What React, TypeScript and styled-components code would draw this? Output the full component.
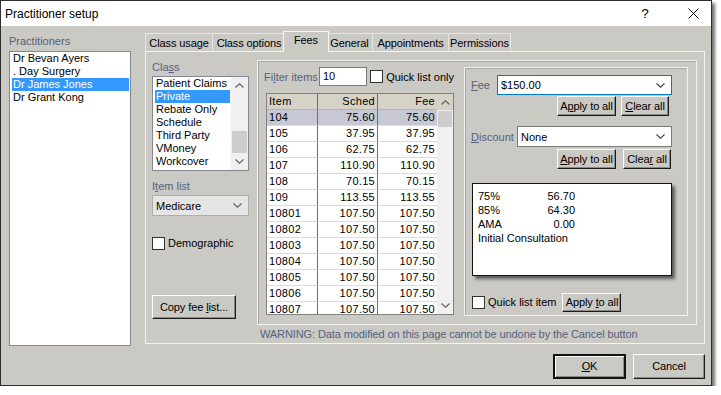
import React from 'react';
import styled, { createGlobalStyle, css } from 'styled-components';

const BG = '#CAC9C4';
const LABEL = '#56617F';

const GlobalStyle = createGlobalStyle`
  html, body { margin: 0; padding: 0; background: #fff; }
  body { font-family: "Liberation Sans", Arial, sans-serif; font-size: 11px; color: #000; }
  * { box-sizing: border-box; }
  u { text-decoration: underline; text-underline-offset: 1px; }
`;

const Window = styled.div`
  width: 712px;
  height: 386px;
  border: 1px solid #2e2e2e;
  background: ${BG};
  box-shadow: 3px 3px 3px rgba(0, 0, 0, 0.55);
  display: flex;
  flex-direction: column;
`;

const TitleBar = styled.div`
  height: 25px;
  background: #fff;
  display: flex;
  align-items: center;
  padding-left: 4px;
  font-size: 12px;
  flex-shrink: 0;
`;

const TitleText = styled.span`
  flex: 1;
`;

const TitleButtons = styled.div`
  display: flex;
  gap: 12px;
  height: 100%;
`;

const TitleButton = styled.div`
  width: 36px;
  display: flex;
  align-items: center;
  justify-content: center;
  font-size: 13px;
`;

const Body = styled.div`
  display: grid;
  grid-template-columns: 122px 560px;
  grid-template-rows: 320px auto;
  column-gap: 14px;
  padding-left: 8px;
`;

const LeftCol = styled.div`
  display: flex;
  flex-direction: column;
`;

const Label = styled.div<{ $mt?: number }>`
  color: ${LABEL};
  height: 13px;
  line-height: 13px;
  margin-top: ${(p) => p.$mt ?? 0}px;
  white-space: nowrap;
`;

const ListBox = styled.div<{ $w: number; $h: number; $mt?: number }>`
  width: ${(p) => p.$w}px;
  height: ${(p) => p.$h}px;
  margin-top: ${(p) => p.$mt ?? 0}px;
  background: #fff;
  border: 1px solid #828790;
  display: flex;
  overflow: hidden;
`;

const ListItems = styled.div`
  flex: 1;
  display: flex;
  flex-direction: column;
`;

const ListItem = styled.div<{ $selected?: boolean }>`
  height: 13px;
  line-height: 13px;
  margin: 0 1px 0 2px;
  padding-left: 1px;
  white-space: nowrap;
  ${(p) =>
    p.$selected &&
    css`
      background: #3399ff;
      color: #fff;
    `}
`;

const VScroll = styled.div<{ $w: number }>`
  width: ${(p) => p.$w}px;
  background: #f0f0f0;
  display: flex;
  flex-direction: column;
  align-items: stretch;
`;

const ScrollArrow = styled.div<{ $h: number }>`
  height: ${(p) => p.$h}px;
  display: flex;
  align-items: center;
  justify-content: center;
`;

const ScrollTrack = styled.div`
  flex: 1;
  display: flex;
  flex-direction: column;
`;

const ScrollThumb = styled.div<{ $top: number; $h: number }>`
  margin-top: ${(p) => p.$top}px;
  height: ${(p) => p.$h}px;
  background: #cdcdcd;
  margin-left: 1px;
  margin-right: 1px;
`;

const RightCol = styled.div`
  display: flex;
  flex-direction: column;
  padding-top: 5px;
`;

const TabStrip = styled.div`
  height: 20px;
  display: flex;
  align-items: flex-end;
  position: relative;
  z-index: 1;
`;

const Tab = styled.div<{ $w: number; $active?: boolean }>`
  width: ${(p) => p.$w}px;
  height: 18px;
  border: 1px solid #e6e5e1;
  border-bottom: none;
  margin-right: -1px;
  display: flex;
  align-items: center;
  justify-content: center;
  white-space: nowrap;
  letter-spacing: -0.1px;
  background: ${BG};
  ${(p) =>
    p.$active &&
    css`
      height: 21px;
      margin: 0 -3px -1px -2px;
      padding-bottom: 4px;
      background: ${BG};
      border-color: #f6f6f6;
      position: relative;
      z-index: 2;
    `}
`;

const Panel = styled.div`
  height: 293px;
  border: 1px solid #f4f4f4;
  display: flex;
  padding-left: 6px;
`;

const PanelLeft = styled.div`
  width: 97px;
  display: flex;
  flex-direction: column;
`;

const Combo = styled.div<{ $w: number; $h: number; $variant: 'flat' | 'focus' | 'plain'; $mt?: number }>`
  width: ${(p) => p.$w}px;
  height: ${(p) => p.$h}px;
  margin-top: ${(p) => p.$mt ?? 0}px;
  display: flex;
  align-items: center;
  padding-left: 3px;
  padding-right: 6px;
  justify-content: space-between;
  ${(p) =>
    p.$variant === 'flat'
      ? css`
          background: #e5e5e5;
          border: 1px solid #adadad;
        `
      : p.$variant === 'focus'
      ? css`
          background: #fff;
          border: 1px solid #0078d7;
        `
      : css`
          background: #fff;
          border: 1px solid #7a7a7a;
        `}
`;

const CheckRow = styled.div<{ $mt?: number; $ml?: number }>`
  display: flex;
  align-items: center;
  gap: 3px;
  height: 14px;
  margin-top: ${(p) => p.$mt ?? 0}px;
  margin-left: ${(p) => p.$ml ?? 0}px;
  white-space: nowrap;
`;

const CheckBox = styled.div`
  width: 13px;
  height: 13px;
  background: #fff;
  border: 1px solid #333;
  flex-shrink: 0;
`;

const Button = styled.div<{ $w: number; $h: number; $mt?: number; $ml?: number; $default?: boolean }>`
  width: ${(p) => p.$w}px;
  height: ${(p) => p.$h}px;
  margin-top: ${(p) => p.$mt ?? 0}px;
  margin-left: ${(p) => p.$ml ?? 0}px;
  line-height: ${(p) => p.$h - 2}px;
  text-align: center;
  white-space: nowrap;
  letter-spacing: -0.1px;
  background: ${BG};
  border: 1px solid;
  border-color: #fdfdfd #1a1a1a #1a1a1a #fdfdfd;
  box-shadow: inset -1px -1px 0 #8a8a86;
  flex-shrink: 0;
  ${(p) =>
    p.$default &&
    css`
      border: 2px solid #111;
      line-height: ${p.$h - 4}px;
      box-shadow: inset 1px 1px 0 #fdfdfd, inset -1px -1px 0 #8a8a86;
    `}
`;

const PanelMain = styled.div`
  margin-left: 8px;
  display: flex;
  flex-direction: column;
`;

const GroupBox = styled.div<{ $w: number; $h: number; $mt: number }>`
  width: ${(p) => p.$w}px;
  height: ${(p) => p.$h}px;
  margin-top: ${(p) => p.$mt}px;
  border: 1px solid #f0f0f0;
  box-shadow: inset 1px 1px 0 #a9a8a4;
  flex-shrink: 0;
`;

const MainGroup = styled(GroupBox)`
  display: flex;
  padding-left: 6px;
`;

const FeeArea = styled.div`
  width: 190px;
  display: flex;
  flex-direction: column;
`;

const FilterRow = styled.div`
  display: flex;
  align-items: center;
  margin-top: 6px;
  height: 19px;
`;

const TextInput = styled.div`
  width: 51px;
  height: 19px;
  margin-left: 3px;
  background: #fff;
  border: 1px solid #7a7a7a;
  padding-left: 3px;
  line-height: 17px;
`;

const Grid = styled.div`
  width: 188px;
  height: 222px;
  margin-top: 7px;
  margin-left: 2px;
  border: 1px solid #828282;
  display: flex;
  overflow: hidden;
  background: #fff;
`;

const GridTable = styled.div`
  display: grid;
  grid-template-columns: 51px 60px 59px;
  grid-auto-rows: 16px;
  align-content: start;
`;

const Cell = styled.div<{ $head?: boolean; $sel?: boolean; $right?: boolean; $last?: boolean }>`
  border-right: ${(p) => (p.$last ? 'none' : '1px solid #6e6e6e')};
  border-bottom: 1px solid ${(p) => (p.$head ? '#b8b5a8' : '#dcdcdc')};
  padding: 0 2px 0 2px;
  line-height: 15px;
  white-space: nowrap;
  text-align: ${(p) => (p.$right ? 'right' : 'left')};
  letter-spacing: 0.3px;
  background: ${(p) => (p.$head ? '#d6d3c6' : p.$sel ? '#c6c9d3' : '#fff')};
`;

const GridScroll = styled.div`
  width: 16px;
  display: flex;
  flex-direction: column;
  background: #f0f0f0;
`;

const GridScrollHead = styled.div`
  height: 16px;
  background: #d6d3c6;
  display: flex;
  align-items: center;
  justify-content: center;
`;

const SubBox = styled(GroupBox)`
  margin-left: 10px;
  display: flex;
  flex-direction: column;
  padding-left: 6px;
`;

const FieldRow = styled.div<{ $mt: number }>`
  display: flex;
  align-items: center;
  margin-top: ${(p) => p.$mt}px;
`;

const FieldLabel = styled.div<{ $w: number }>`
  width: ${(p) => p.$w}px;
  color: ${LABEL};
  white-space: nowrap;
`;

const ButtonRow = styled.div<{ $mt: number; $ml: number; $gap: number }>`
  display: flex;
  margin-top: ${(p) => p.$mt}px;
  margin-left: ${(p) => p.$ml}px;
  gap: ${(p) => p.$gap}px;
`;

const InfoBox = styled.div`
  width: 200px;
  height: 93px;
  margin-top: 14px;
  margin-left: 1px;
  background: #fff;
  border: 1px solid #111;
  box-shadow: 3px 3px 3px rgba(0, 0, 0, 0.55);
  padding: 5px 0 0 5px;
`;

const InfoLine = styled.div`
  display: grid;
  grid-template-columns: 60px 37px;
  height: 14px;
  line-height: 14px;
  white-space: nowrap;
`;

const InfoValue = styled.span`
  text-align: right;
`;

const BottomRow = styled.div`
  display: flex;
  align-items: center;
  margin-top: 17px;
  margin-left: 1px;
  height: 18px;
`;

const Warning = styled.div`
  color: ${LABEL};
  margin-top: 3px;
  margin-left: 3px;
  height: 13px;
  line-height: 13px;
  white-space: nowrap;
  letter-spacing: -0.1px;
`;

const Footer = styled.div`
  grid-column: 1 / span 2;
  display: flex;
  justify-content: flex-end;
  gap: 7px;
  margin-top: 8px;
`;

const Chevron = ({ up, color = '#606060' }: { up?: boolean; color?: string }) => (
  <svg width="9" height="5" viewBox="0 0 9 5">
    <path d={up ? 'M0.5 4.5 L4.5 0.8 L8.5 4.5' : 'M0.5 0.5 L4.5 4.2 L8.5 0.5'} fill="none" stroke={color} strokeWidth="1.1" />
  </svg>
);

const practitioners = ['Dr Bevan Ayers', '. Day Surgery', 'Dr James Jones', 'Dr Grant Kong'];
const classes = ['Patient Claims', 'Private', 'Rebate Only', 'Schedule', 'Third Party', 'VMoney', 'Workcover'];
const tabs: [string, number][] = [
  ['Class usage', 68],
  ['Class options', 74],
  ['Fees', 46],
  ['General', 47],
  ['Appointments', 77],
  ['Permissions', 63],
];
const rows: [string, string, string][] = [
  ['104', '75.60', '75.60'],
  ['105', '37.95', '37.95'],
  ['106', '62.75', '62.75'],
  ['107', '110.90', '110.90'],
  ['108', '70.15', '70.15'],
  ['109', '113.55', '113.55'],
  ['10801', '107.50', '107.50'],
  ['10802', '107.50', '107.50'],
  ['10803', '107.50', '107.50'],
  ['10804', '107.50', '107.50'],
  ['10805', '107.50', '107.50'],
  ['10806', '107.50', '107.50'],
  ['10807', '107.50', '107.50'],
];

export default function App() {
  return (
    <>
      <GlobalStyle />
      <Window>
        <TitleBar>
          <TitleText>Practitioner setup</TitleText>
          <TitleButtons>
            <TitleButton>?</TitleButton>
            <TitleButton>
              <svg width="11" height="11" viewBox="0 0 11 11">
                <path d="M0.5 0.5 L10.5 10.5 M10.5 0.5 L0.5 10.5" stroke="#111" strokeWidth="1" />
              </svg>
            </TitleButton>
          </TitleButtons>
        </TitleBar>
        <Body>
          <LeftCol>
            <Label $mt={9}>Practitioners</Label>
            <ListBox $w={122} $h={295} $mt={3}>
              <ListItems>
                {practitioners.map((p) => (
                  <ListItem key={p} $selected={p === 'Dr James Jones'}>
                    {p}
                  </ListItem>
                ))}
              </ListItems>
            </ListBox>
          </LeftCol>
          <RightCol>
            <TabStrip>
              {tabs.map(([t, w]) => (
                <Tab key={t} $w={w} $active={t === 'Fees'}>
                  {t}
                </Tab>
              ))}
            </TabStrip>
            <Panel>
              <PanelLeft>
                <Label $mt={9}>
                  Cla<u>s</u>s
                </Label>
                <ListBox $w={97} $h={95} $mt={2}>
                  <ListItems>
                    {classes.map((c) => (
                      <ListItem key={c} $selected={c === 'Private'}>
                        {c}
                      </ListItem>
                    ))}
                  </ListItems>
                  <VScroll $w={17}>
                    <ScrollArrow $h={17}>
                      <Chevron up />
                    </ScrollArrow>
                    <ScrollTrack>
                      <ScrollThumb $top={37} $h={22} />
                    </ScrollTrack>
                    <ScrollArrow $h={17}>
                      <Chevron />
                    </ScrollArrow>
                  </VScroll>
                </ListBox>
                <Label $mt={9}>
                  I<u>t</u>em list
                </Label>
                <Combo $w={97} $h={21} $mt={2} $variant="flat">
                  <span>Medicare</span>
                  <Chevron />
                </Combo>
                <CheckRow $mt={20}>
                  <CheckBox />
                  <span>Demographic</span>
                </CheckRow>
                <Button $w={84} $h={24} $mt={45}>
                  Copy fee <u>l</u>ist...
                </Button>
              </PanelLeft>
              <PanelMain>
                <MainGroup $w={440} $h={265} $mt={8}>
                  <FeeArea>
                    <FilterRow>
                      <FieldLabel $w={52}>
                        Fi<u>l</u>ter items
                      </FieldLabel>
                      <TextInput>10</TextInput>
                      <CheckRow $ml={3}>
                        <CheckBox />
                        <span>Quick list only</span>
                      </CheckRow>
                    </FilterRow>
                    <Grid>
                      <GridTable>
                        <Cell $head>Item</Cell>
                        <Cell $head $right>
                          Sched
                        </Cell>
                        <Cell $head $right $last>
                          Fee
                        </Cell>
                        {rows.map(([a, b, c], i) => (
                          <React.Fragment key={a}>
                            <Cell $sel={i === 0}>{a}</Cell>
                            <Cell $sel={i === 0} $right>
                              {b}
                            </Cell>
                            <Cell $sel={i === 0} $right $last>
                              {c}
                            </Cell>
                          </React.Fragment>
                        ))}
                      </GridTable>
                      <GridScroll>
                        <GridScrollHead>
                          <Chevron up />
                        </GridScrollHead>
                        <ScrollTrack>
                          <ScrollThumb $top={1} $h={16} />
                        </ScrollTrack>
                        <ScrollArrow $h={17}>
                          <Chevron />
                        </ScrollArrow>
                      </GridScroll>
                    </Grid>
                  </FeeArea>
                  <SubBox $w={224} $h={249} $mt={6}>
                    <FieldRow $mt={7}>
                      <FieldLabel $w={26}>
                        <u>F</u>ee
                      </FieldLabel>
                      <Combo $w={175} $h={20} $variant="focus">
                        <span>$150.00</span>
                        <Chevron color="#444" />
                      </Combo>
                    </FieldRow>
                    <ButtonRow $mt={1} $ml={86} $gap={5}>
                      <Button $w={59} $h={20}>
                        A<u>p</u>ply to all
                      </Button>
                      <Button $w={48} $h={20}>
                        <u>C</u>lear all
                      </Button>
                    </ButtonRow>
                    <FieldRow $mt={10}>
                      <FieldLabel $w={46}>
                        <u>D</u>iscount
                      </FieldLabel>
                      <Combo $w={155} $h={21} $variant="plain">
                        <span>None</span>
                        <Chevron color="#444" />
                      </Combo>
                    </FieldRow>
                    <ButtonRow $mt={2} $ml={86} $gap={7}>
                      <Button $w={59} $h={20}>
                        <u>A</u>pply to all
                      </Button>
                      <Button $w={48} $h={20}>
                        Clea<u>r</u> all
                      </Button>
                    </ButtonRow>
                    <InfoBox>
                      <InfoLine>
                        <span>75%</span>
                        <InfoValue>56.70</InfoValue>
                      </InfoLine>
                      <InfoLine>
                        <span>85%</span>
                        <InfoValue>64.30</InfoValue>
                      </InfoLine>
                      <InfoLine>
                        <span>AMA</span>
                        <InfoValue>0.00</InfoValue>
                      </InfoLine>
                      <InfoLine>
                        <span>Initial Consultation</span>
                      </InfoLine>
                    </InfoBox>
                    <BottomRow>
                      <CheckRow>
                        <CheckBox />
                        <span>Quick list item</span>
                      </CheckRow>
                      <Button $w={59} $h={19} $ml={6}>
                        Apply <u>t</u>o all
                      </Button>
                    </BottomRow>
                  </SubBox>
                </MainGroup>
                <Warning>WARNING: Data modified on this page cannot be undone by the Cancel button</Warning>
              </PanelMain>
            </Panel>
          </RightCol>
          <Footer>
            <Button $w={73} $h={25} $default>
              <u>O</u>K
            </Button>
            <Button $w={72} $h={25}>
              Cancel
            </Button>
          </Footer>
        </Body>
      </Window>
    </>
  );
}
